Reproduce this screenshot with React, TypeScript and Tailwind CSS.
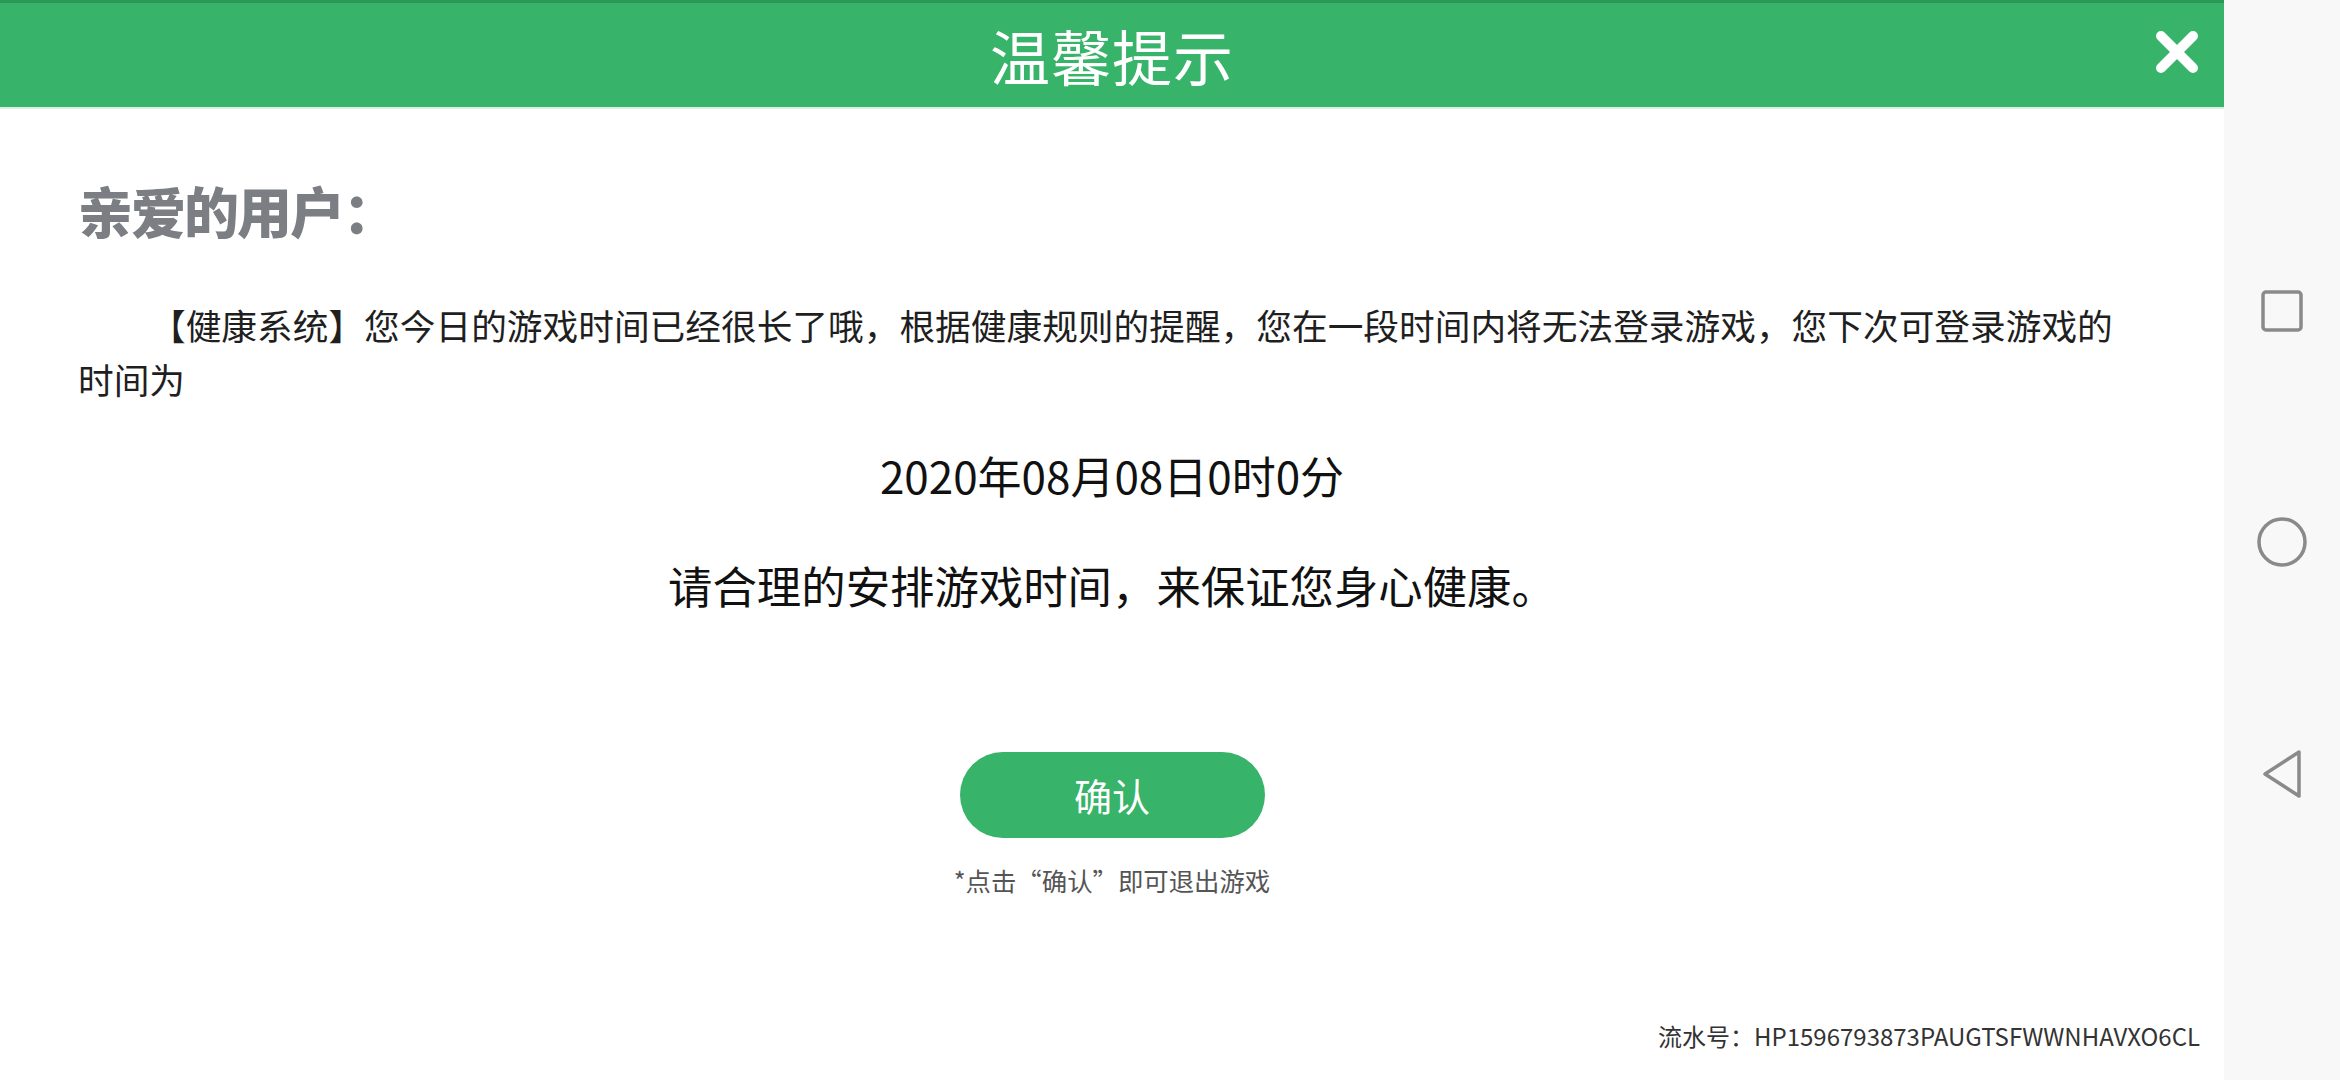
import React from 'react'

const cjk = "font-['Noto_Sans_CJK_SC','Noto_Sans',sans-serif]"

function CloseIcon() {
  return (
    <svg width="46" height="44" viewBox="0 0 46 44" fill="none">
      <path d="M7 6L39 38M39 6L7 38" stroke="#ffffff" strokeWidth="10" strokeLinecap="round" />
    </svg>
  )
}

function NavBar() {
  return (
    <div className="w-[116px] h-full bg-[#f8f8f8] flex flex-col items-center pt-[289px]">
      <svg width="44" height="44" viewBox="0 0 44 44" fill="none">
        <rect x="3" y="3" width="38" height="38" rx="3" stroke="#8a8a8a" strokeWidth="3.5" />
      </svg>
      <svg className="mt-[183px]" width="52" height="52" viewBox="0 0 52 52" fill="none">
        <circle cx="26" cy="26" r="23" stroke="#8a8a8a" strokeWidth="3.5" />
      </svg>
      <svg className="mt-[180px]" width="46" height="52" viewBox="0 0 46 52" fill="none">
        <path d="M40 4L6 26L40 48Z" stroke="#8a8a8a" strokeWidth="3.5" strokeLinejoin="round" />
      </svg>
    </div>
  )
}

export default function App() {
  return (
    <div className={`w-[2340px] h-[1080px] flex bg-white overflow-hidden ${cjk}`}>
      <div className="w-[2224px] h-full flex flex-col">
        {/* Header */}
        <div className="relative h-[109px] shrink-0 bg-[#37b36a] border-t-[3px] border-[#2b9a59] border-b-[2px] border-b-[#d6f0e0] flex items-center justify-center">
          <span className="text-white text-[60px] leading-none tracking-[1px]">温馨提示</span>
          <button className="absolute right-[24px] top-[27px]" aria-label="关闭">
            <CloseIcon />
          </button>
        </div>

        {/* Body */}
        <div className="flex-1 flex flex-col px-[78px]">
          <div className="mt-[72px] h-[56px] leading-[56px] text-[55px] font-black text-[#7b7e82] tracking-[-2px]">
            亲爱的用户：
          </div>

          <p className="mt-[61px] text-[35.7px] leading-[54px] text-[#1f1f1f] indent-[72px]">
            【健康系统】您今日的游戏时间已经很长了哦，根据健康规则的提醒，您在一段时间内将无法登录游戏，您下次可登录游戏的时间为
          </p>

          <div className="mt-[39px] text-center text-[44px] leading-[60px] text-[#111]">
            2020年08月08日0时0分
          </div>

          <div className="mt-[50px] text-center text-[44.4px] leading-[60px] text-[#111]">
            请合理的安排游戏时间，来保证您身心健康。
          </div>

          <div className="mt-[137px] flex justify-center">
            <button className="w-[305px] h-[86px] rounded-full bg-[#37b36a] text-white text-[38px] leading-none">
              确认
            </button>
          </div>

          <div className="mt-[27px] text-center text-[25.4px] leading-[30px] text-[#555]">
            *点击“确认”即可退出游戏
          </div>

          <div className="mt-auto pb-[29px] -mr-[54px] text-right text-[24px] leading-[30px] text-[#333]">
            流水号：HP1596793873PAUGTSFWWNHAVXO6CL
          </div>
        </div>
      </div>
      <NavBar />
    </div>
  )
}
